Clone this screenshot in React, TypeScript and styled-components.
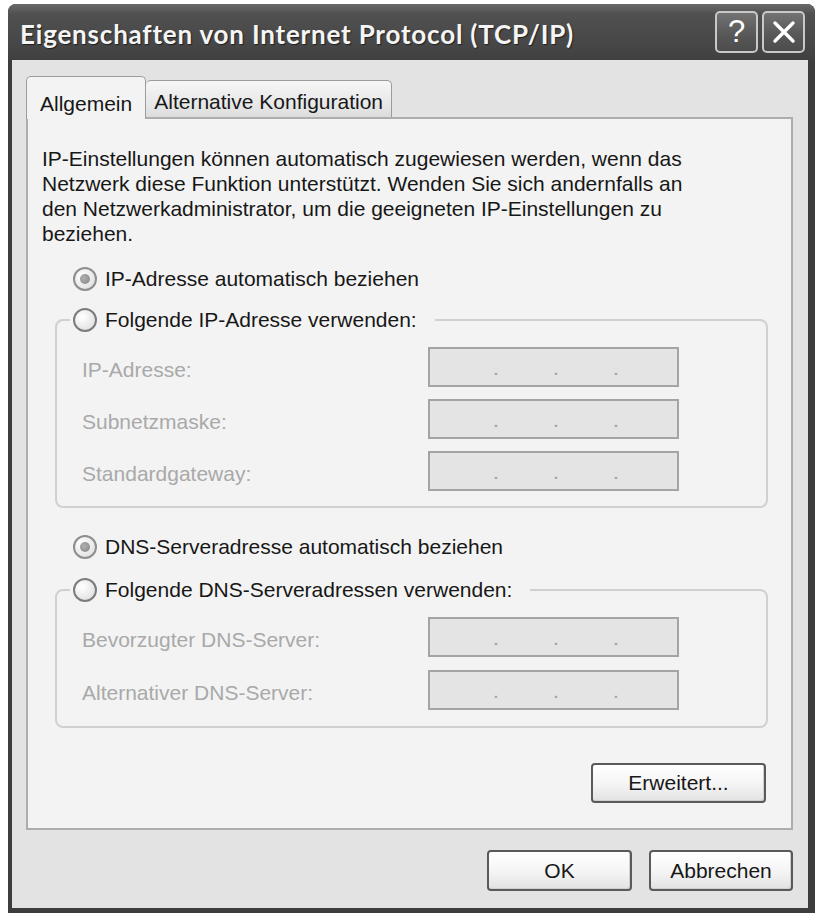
import React from 'react';
import styled, { createGlobalStyle } from 'styled-components';

const GlobalStyle = createGlobalStyle`
  html, body {
    margin: 0;
    padding: 0;
    background: #fff;
  }
  body {
    font-family: 'Liberation Sans', Arial, sans-serif;
    font-size: 21px;
    color: #171717;
  }
  * {
    box-sizing: border-box;
  }
`;

const Fenster = styled.div`
  margin: 4px 0 0 8px;
  width: 807px;
  height: 909px;
  display: flex;
  flex-direction: column;
  background: #3d3d3d;
  border-radius: 8px 8px 0 0;
  overflow: hidden;
`;

const TitelLeiste = styled.div`
  height: 56px;
  flex: none;
  display: flex;
  align-items: center;
  padding: 0 10px 0 12px;
  background: linear-gradient(#6a6a6a, #505050 18%, #474747 70%, #404040);
`;

const TitelText = styled.div`
  flex: 1;
  font-family: Lato, 'Liberation Sans', sans-serif;
  font-weight: 700;
  font-size: 26px;
  letter-spacing: 0.8px;
  color: #f5f5f5;
  text-shadow: 1px 1px 1px #202020;
  padding-top: 3px;
  white-space: nowrap;
`;

const TitelKnopf = styled.div`
  width: 43px;
  height: 42px;
  margin-left: 4px;
  border: 2px solid #c8c8c8;
  border-radius: 5px;
  background: linear-gradient(#727272, #575757 60%, #4c4c4c);
  display: flex;
  align-items: center;
  justify-content: center;
  color: #fff;
  font-size: 31px;
`;

const Rahmen = styled.div`
  flex: 1;
  margin: 0 7px 5px 4px;
  background: #e3e3e3;
  padding: 16px 15px 0 14px;
  display: flex;
  flex-direction: column;
`;

const TabLeiste = styled.div`
  display: flex;
  align-items: flex-end;
  height: 41px;
  flex: none;
`;

const Tab = styled.div<{ $aktiv?: boolean }>`
  position: relative;
  z-index: ${p => (p.$aktiv ? 1 : 0)};
  height: ${p => (p.$aktiv ? '43px' : '37px')};
  margin-bottom: ${p => (p.$aktiv ? '-2px' : '0')};
  padding: ${p => (p.$aktiv ? '14px 13px 0' : '8px 8px 0')};
  line-height: 25px;
  border: 1px solid #9c9c9c;
  border-bottom: none;
  border-left: ${p => (p.$aktiv ? '1px solid #9c9c9c' : 'none')};
  border-radius: 5px 5px 0 0;
  background: ${p => (p.$aktiv ? '#f3f3f3' : 'linear-gradient(#f6f6f6, #e6e6e6 70%, #dcdcdc)')};
  white-space: nowrap;
`;

const Karte = styled.div`
  height: 713px;
  flex: none;
  border: 2px solid #adadad;
  background: #f3f3f3;
  padding: 27px 23px 25px 14px;
  display: flex;
  flex-direction: column;
`;

const Absatz = styled.p`
  margin: 0;
  line-height: 25px;
`;

const RadioZeile = styled.label<{ $einzug?: number; $abstand?: number }>`
  display: flex;
  align-items: center;
  gap: 8px;
  height: 26px;
  line-height: 26px;
  margin-left: ${p => p.$einzug ?? 0}px;
  margin-top: ${p => p.$abstand ?? 0}px;
  white-space: nowrap;
`;

const RadioKreis = styled.span<{ $gewaehlt?: boolean }>`
  width: 24px;
  height: 24px;
  flex: none;
  border-radius: 50%;
  border: 2px solid ${p => (p.$gewaehlt ? '#8e8e8e' : '#7c7c7c')};
  background: radial-gradient(circle at 35% 35%, #ffffff, #e9e9e9 60%, #d6d6d6);
  display: flex;
  align-items: center;
  justify-content: center;

  &::after {
    content: '';
    display: ${p => (p.$gewaehlt ? 'block' : 'none')};
    width: 10px;
    height: 10px;
    border-radius: 50%;
    background: radial-gradient(circle at 40% 40%, #b0b0b0, #838383);
  }
`;

const Gruppe = styled.fieldset<{ $abstand: number }>`
  margin: ${p => p.$abstand}px 0 0 13px;
  padding: 0;
  min-width: 0;
  border: 2px solid #d0d0d0;
  border-radius: 8px;
`;

const Legende = styled.legend`
  margin-left: 13px;
  padding: 0 18px 0 3px;
`;

const FeldRaster = styled.div<{ $luecke: number; $unten: number }>`
  display: grid;
  grid-template-columns: 346px 251px;
  row-gap: ${p => p.$luecke}px;
  align-items: center;
  padding: 14px 0 ${p => p.$unten}px 25px;
`;

const FeldName = styled.span`
  color: #a9a9a9;
  line-height: 25px;
  margin-top: 5px;
  white-space: nowrap;
`;

const IpFeld = styled.div`
  height: 40px;
  border: 2px solid #a4a4a4;
  background: #e4e4e4;
  display: flex;
  align-items: center;
  gap: 54px;
  padding-left: 63px;
`;

const Punkt = styled.span`
  width: 6px;
  text-align: center;
  line-height: 25px;
  color: #9e9e9e;
`;

const Knopf = styled.button<{ $breite: number; $hoehe: number }>`
  width: ${p => p.$breite}px;
  height: ${p => p.$hoehe}px;
  padding: 0;
  font: inherit;
  color: #171717;
  border: 2px solid #5a5a5a;
  border-radius: 4px;
  background: linear-gradient(#ffffff, #f4f4f4 55%, #e2e2e2);
  box-shadow: inset -1px -1px 0 #d0d0d0;
`;

const ErweitertKnopf = styled(Knopf)`
  align-self: flex-end;
  margin-top: auto;
  margin-right: 2px;
`;

const Fuss = styled.div`
  display: flex;
  justify-content: flex-end;
  gap: 17px;
  margin-top: 20px;
`;

const IpEingabe: React.FC = () => (
  <IpFeld>
    <Punkt>.</Punkt>
    <Punkt>.</Punkt>
    <Punkt>.</Punkt>
  </IpFeld>
);

const ipFelder = ['IP-Adresse:', 'Subnetzmaske:', 'Standardgateway:'];
const dnsFelder = ['Bevorzugter DNS-Server:', 'Alternativer DNS-Server:'];

const App: React.FC = () => {
  return (
    <>
      <GlobalStyle />
      <Fenster>
        <TitelLeiste>
          <TitelText>Eigenschaften von Internet Protocol (TCP/IP)</TitelText>
          <TitelKnopf>?</TitelKnopf>
          <TitelKnopf>
            <svg width="24" height="24" viewBox="0 0 24 24">
              <path d="M3 3 L21 21 M21 3 L3 21" stroke="#fff" strokeWidth="3.4" strokeLinecap="round" />
            </svg>
          </TitelKnopf>
        </TitelLeiste>
        <Rahmen>
          <TabLeiste>
            <Tab $aktiv>Allgemein</Tab>
            <Tab>Alternative Konfiguration</Tab>
          </TabLeiste>
          <Karte>
            <Absatz>
              IP-Einstellungen können automatisch zugewiesen werden, wenn das
              <br />
              Netzwerk diese Funktion unterstützt. Wenden Sie sich andernfalls an
              <br />
              den Netzwerkadministrator, um die geeigneten IP-Einstellungen zu
              <br />
              beziehen.
            </Absatz>

            <RadioZeile $einzug={31} $abstand={20}>
              <RadioKreis $gewaehlt />
              IP-Adresse automatisch beziehen
            </RadioZeile>
            <Gruppe $abstand={15}>
              <Legende>
                <RadioZeile>
                  <RadioKreis />
                  Folgende IP-Adresse verwenden:
                </RadioZeile>
              </Legende>
              <FeldRaster $luecke={12} $unten={15}>
                {ipFelder.map(name => (
                  <React.Fragment key={name}>
                    <FeldName>{name}</FeldName>
                    <IpEingabe />
                  </React.Fragment>
                ))}
              </FeldRaster>
            </Gruppe>

            <RadioZeile $einzug={31} $abstand={26}>
              <RadioKreis $gewaehlt />
              DNS-Serveradresse automatisch beziehen
            </RadioZeile>
            <Gruppe $abstand={17}>
              <Legende>
                <RadioZeile>
                  <RadioKreis />
                  Folgende DNS-Serveradressen verwenden:
                </RadioZeile>
              </Legende>
              <FeldRaster $luecke={13} $unten={16}>
                {dnsFelder.map(name => (
                  <React.Fragment key={name}>
                    <FeldName>{name}</FeldName>
                    <IpEingabe />
                  </React.Fragment>
                ))}
              </FeldRaster>
            </Gruppe>

            <ErweitertKnopf $breite={175} $hoehe={40}>Erweitert...</ErweitertKnopf>
          </Karte>
          <Fuss>
            <Knopf $breite={145} $hoehe={41}>OK</Knopf>
            <Knopf $breite={144} $hoehe={41}>Abbrechen</Knopf>
          </Fuss>
        </Rahmen>
      </Fenster>
    </>
  );
};

export default App;
